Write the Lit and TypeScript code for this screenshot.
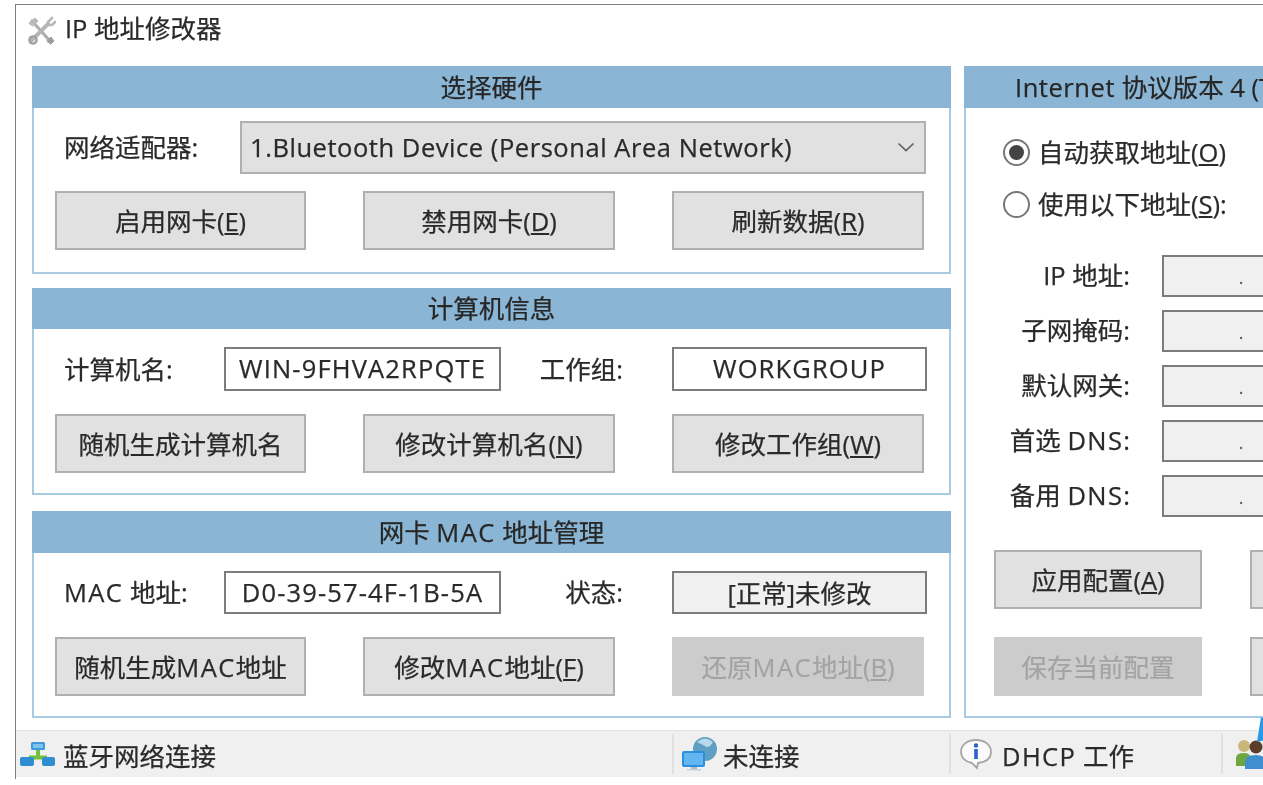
import { LitElement, html, css } from "lit";
import { customElement } from "lit/decorators.js";

const toolsIcon = html`<svg class="tools" width="30" height="30" viewBox="0 0 30 30">
  <g fill="none" stroke-linecap="round" opacity="0.8">
    <path d="M6 5 L24 25" stroke="#9a9a9a" stroke-width="3.2"/>
    <path d="M3 7 L9 2 L12 5 L7 10 Z" fill="#aaa" stroke="#aaa" stroke-width="1"/>
    <path d="M21 25 L25 21 L28 25 L25 28 Z" fill="#858585" stroke="#858585" stroke-width="1"/>
    <path d="M22 8 L6 24" stroke="#a5a5a5" stroke-width="4"/>
    <path d="M26 2 L22 6 L23 9 L26 9 L29 6" stroke="#a5a5a5" stroke-width="2.6"/>
    <circle cx="7" cy="24" r="3.6" stroke="#8a8a8a" stroke-width="2.4"/>
  </g>
</svg>`;

const netIcon = html`<svg width="36" height="26" viewBox="0 0 36 26">
  <path d="M18 6 V16 M9 16.5 H27" fill="none" stroke="#74c23c" stroke-width="4"/>
  <rect x="11" y="1" width="14" height="8" rx="1.5" fill="#3f9bd8"/>
  <rect x="13" y="3" width="10" height="4" fill="#7cc4ee"/>
  <rect x="0" y="16" width="14" height="9" rx="2" fill="#2f8ed0"/>
  <rect x="22" y="16" width="13" height="9" rx="2" fill="#2f8ed0"/>
</svg>`;

const globeIcon = html`<svg width="36" height="36" viewBox="0 0 36 36">
  <circle cx="24" cy="13" r="12" fill="#5f9fc4"/>
  <path d="M16 6 Q24 -1 32 6 Q28 13 24 10 Q20 8 16 6 Z" fill="#b9d9ea"/>
  <rect x="1" y="15" width="23" height="16" rx="2" fill="#2c8fde"/>
  <rect x="3" y="17" width="19" height="12" fill="#63b6f2"/>
  <rect x="10" y="31" width="6" height="2" fill="#a9bccb"/>
  <rect x="6" y="33" width="14" height="1.6" fill="#c8d4dd"/>
</svg>`;

const infoIcon = html`<svg width="34" height="32" viewBox="0 0 34 32">
  <path d="M17 2 C8 2 2 7 2 14 C2 20 7 24 13 25 L18 30 L19 25 C27 24 32 20 32 14 C32 7 26 2 17 2 Z" fill="#fbfbfb" stroke="#a5a5a5" stroke-width="1.8"/>
  <circle cx="17" cy="7.5" r="2.2" fill="#2f62c8"/>
  <path d="M17 11 V21" stroke="#2f62c8" stroke-width="3.6"/>
</svg>`;

const peopleIcon = html`<svg class="people" width="40" height="56" viewBox="0 0 40 56">
  <circle cx="11" cy="30" r="6" fill="#cbb67c"/>
  <path d="M3 50 V42 Q3 37 11 37 Q17 37 18 42 V50 Z" fill="#6fa640"/>
  <circle cx="23" cy="31" r="6.5" fill="#5b3d2a"/>
  <path d="M12 53 V46 Q12 39 23 39 Q32 39 33 46 V53 Z" fill="#3f8ed0"/>
  <path d="M24 26 L28 1 L33 4 L32 24 Z" fill="#2a97e8"/>
</svg>`;

const chevron = html`<svg class="chev" width="18" height="10" viewBox="0 0 18 10"><path d="M1.5 1.5 L9 8.5 L16.5 1.5" fill="none" stroke="#606060" stroke-width="1.7"/></svg>`;

@customElement("app-root")
export class AppRoot extends LitElement {
  static styles = css`
    :host {
      display: block;
      width: 1263px;
      height: 785px;
      overflow: hidden;
      background: #fff;
      font-family: "Open Sans", "Noto Sans CJK SC", sans-serif;
      font-size: 25.5px;
      color: #2a2a2a;
      -webkit-text-stroke: 0.25px #2a2a2a;
    }
    .page { padding: 4px 0 0 15px; filter: blur(0.6px); background: #fff; height: 781px; box-sizing: border-box; width: 1263px; overflow: hidden; }
    .window {
      width: 1700px; height: 775px; box-sizing: border-box;
      border-left: 1.5px solid #7d7d7d; border-top: 1.5px solid #7d7d7d;
      display: flex; flex-direction: column;
    }
    .title { height: 61px; display: flex; align-items: flex-start; padding: 7px 0 0 10px; box-sizing: border-box; line-height: 32px; }
    .title span { margin-left: 9px; }
    .tools { margin-top: 4px; }
    .body { display: flex; gap: 13px; padding-left: 16px; height: 652px; }
    .left { width: 919px; display: flex; flex-direction: column; }
    .panel { border: 2px solid #a9cbe2; border-top: 0; box-sizing: border-box; display: flex; flex-direction: column; }
    .p1 { height: 208px; }
    .p2 { height: 207px; margin-top: 14px; }
    .p3 { height: 207px; margin-top: 16px; }
    .right { width: 524px; height: 652px; }
    .head { background: #8ab5d5; margin: 0 -2px; height: 42px; line-height: 42px; text-align: center; color: #262626; flex: none; }
    .p2 .head { height: 41px; line-height: 41px; }
    .right .head { text-align: left; padding-left: 51px; white-space: nowrap; }
    .lat { letter-spacing: 0.55px; }
    .c { letter-spacing: 1.4px; }
    .row { display: flex; align-items: center; }
    .p1 .row { margin-top: 13px; height: 53px; }
    .p2 .row { margin-top: 18px; height: 44px; }
    .p3 .row { margin-top: 18px; height: 43px; }
    .lab { width: 190px; padding: 0 0 4px 30px; box-sizing: border-box; white-space: nowrap; flex: none; }
    .p1 .lab { width: 206px; }
    .select {
      width: 686px; height: 53px; box-sizing: border-box; background: #e1e1e1; border: 2px solid #b0b0b0;
      display: flex; align-items: center; justify-content: space-between; padding: 0 9px 2px 8px; white-space: nowrap;
    }
    .input {
      height: 100%; box-sizing: border-box; border: 2px solid #7c7c7c; background: #fff;
      display: flex; align-items: center; justify-content: center; white-space: nowrap; flex: none; width: 277px;
      padding-bottom: 2px;
    }
    .input.m { letter-spacing: 1.15px; }
    .lab2 { width: 171px; padding: 0 49px 4px 0; box-sizing: border-box; text-align: right; flex: none; }
    .input.w2 { width: 255px; }
    .input.st { background: #f0f0f0; }
    .btns { display: grid; grid-template-columns: 251px 252px 252px; column-gap: 57px; padding-left: 21px; }
    .p1 .btns { margin-top: 17px; }
    .p2 .btns { margin-top: 23px; }
    .p3 .btns { margin-top: 23px; }
    .btn {
      height: 59px; box-sizing: border-box; background: #e1e1e1; border: 2px solid #b0b0b0; padding-bottom: 2px;
      display: flex; align-items: center; justify-content: center; white-space: pre; flex: none;
    }
    .btn.dis { background: #cccccc; border-color: #cccccc; color: #a3a3a3; -webkit-text-stroke: 0.2px #a3a3a3; }
    u { text-underline-offset: 2px; text-decoration-thickness: 1.5px; }
    .radio { display: flex; align-items: center; height: 30px; padding-left: 37px; white-space: nowrap; }
    .radio span { margin-top: -3px; }
    .r1 { margin-top: 29px; }
    .r2 { margin-top: 22px; }
    .dot {
      width: 27px; height: 27px; box-sizing: border-box; border: 2px solid #777; border-radius: 50%;
      margin-right: 8px; display: flex; align-items: center; justify-content: center; flex: none; background: #fff;
    }
    .dot i { width: 15px; height: 15px; border-radius: 50%; background: #444; }
    .fields { margin-top: 36px; display: flex; flex-direction: column; gap: 13px; }
    .f { display: flex; align-items: center; height: 42px; }
    .f .l { width: 164px; text-align: right; flex: none; white-space: nowrap; padding-bottom: 5px; box-sizing: border-box; }
    .f .ip {
      margin-left: 32px; width: 320px; height: 100%; box-sizing: border-box; border: 2px solid #7c7c7c; background: #f0f0f0;
      display: flex; gap: 74px; padding: 6px 0 0 75px; line-height: 30px; font-size: 16px; color: #555;
    }
    .bs { display: grid; grid-template-columns: 208px 208px; column-gap: 48px; row-gap: 28px; padding-left: 28px; margin-top: 33px; }
    .status {
      height: 47px; background: #f0f0f0; border-top: 1px solid #e2e2e2; margin-top: 12px; box-sizing: border-box;
      display: flex; align-items: center; flex: none;
    }
    .seg { height: 40px; display: flex; align-items: center; box-sizing: border-box; white-space: nowrap; flex: none; }
    .s1 { width: 656px; padding-left: 4px; }
    .s2 { width: 277px; border-left: 2px solid #e0e0e0; padding-left: 7px; }
    .s3 { width: 272px; border-left: 2px solid #e0e0e0; padding-left: 8px; }
    .s4 { width: 300px; border-left: 2px solid #e0e0e0; padding-left: 10px; }
    .s1 svg { margin-right: 7px; }
    .s2 svg { margin-right: 6px; }
    .s3 svg { margin-right: 9px; }
    .people { margin-top: -20px; overflow: visible; }
  `;

  private btn(text: unknown, key = "", dis = false) {
    return html`<div class="btn ${dis ? "dis" : ""}"><span>${text}${key ? html`(<u>${key}</u>)` : ""}</span></div>`;
  }

  private field(label: unknown) {
    return html`<div class="f"><div class="l">${label}</div><div class="ip"><span>.</span><span>.</span><span>.</span></div></div>`;
  }

  render() {
    const mac = html`<span class="c">MAC</span>`;
    const dns = html`<span class="c">DNS</span>`;
    return html`
      <div class="page">
        <div class="window">
          <div class="title">${toolsIcon}<span>IP 地址修改器</span></div>
          <div class="body">
            <div class="left">
              <section class="panel p1">
                <div class="head">选择硬件</div>
                <div class="row">
                  <div class="lab">网络适配器:</div>
                  <div class="select"><span class="lat">1.Bluetooth Device (Personal Area Network)</span>${chevron}</div>
                </div>
                <div class="btns">${this.btn("启用网卡", "E")}${this.btn("禁用网卡", "D")}${this.btn("刷新数据", "R")}</div>
              </section>
              <section class="panel p2">
                <div class="head">计算机信息</div>
                <div class="row">
                  <div class="lab">计算机名:</div>
                  <div class="input m">WIN-9FHVA2RPQTE</div>
                  <div class="lab2">工作组:</div>
                  <div class="input w2 m">WORKGROUP</div>
                </div>
                <div class="btns">${this.btn("随机生成计算机名")}${this.btn("修改计算机名", "N")}${this.btn("修改工作组", "W")}</div>
              </section>
              <section class="panel p3">
                <div class="head">网卡 ${mac} 地址管理</div>
                <div class="row">
                  <div class="lab">${mac} 地址:</div>
                  <div class="input m">D0-39-57-4F-1B-5A</div>
                  <div class="lab2">状态:</div>
                  <div class="input w2 st">[正常]未修改</div>
                </div>
                <div class="btns">${this.btn(html`随机生成${mac}地址`)}${this.btn(html`修改${mac}地址`, "F")}${this.btn(html`还原${mac}地址`, "B", true)}</div>
              </section>
            </div>
            <section class="panel right">
              <div class="head"><span class="lat">Internet</span> 协议版本 4 (TCP/IPv4)</div>
              <div class="radio r1"><div class="dot"><i></i></div><span>自动获取地址(<u>O</u>)</span></div>
              <div class="radio r2"><div class="dot"></div><span>使用以下地址(<u>S</u>):</span></div>
              <div class="fields">
                ${this.field("IP 地址:")}${this.field("子网掩码:")}${this.field("默认网关:")}${this.field(html`首选 ${dns}:`)}${this.field(html`备用 ${dns}:`)}
              </div>
              <div class="bs">
                ${this.btn("应用配置", "A")}<div class="btn"></div>
                ${this.btn("保存当前配置", "", true)}<div class="btn"></div>
              </div>
            </section>
          </div>
          <div class="status">
            <div class="seg s1">${netIcon}<span>蓝牙网络连接</span></div>
            <div class="seg s2">${globeIcon}<span>未连接</span></div>
            <div class="seg s3">${infoIcon}<span><span class="c">DHCP</span> 工作</span></div>
            <div class="seg s4">${peopleIcon}</div>
          </div>
        </div>
      </div>
    `;
  }
}
